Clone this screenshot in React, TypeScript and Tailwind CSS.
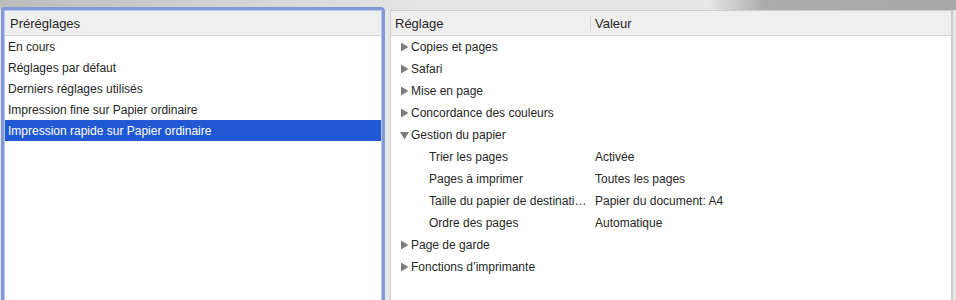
import React from "react";

const font = { fontFamily: '"Liberation Sans", Arial, sans-serif' };

function Tri({ open }: { open?: boolean }) {
  return (
    <svg width="9" height="10" viewBox="0 0 9 10" className="shrink-0">
      {open ? (
        <polygon points="0,2 9,2 4.5,9.5" fill="#7c7c7c" />
      ) : (
        <polygon points="1,0.5 8.5,5 1,9.5" fill="#7c7c7c" />
      )}
    </svg>
  );
}

const presets = [
  "En cours",
  "Réglages par défaut",
  "Derniers réglages utilisés",
  "Impression fine sur Papier ordinaire",
  "Impression rapide sur Papier ordinaire",
];

type Row = { label: string; value?: string; kind: "closed" | "open" | "child" };
const rows: Row[] = [
  { label: "Copies et pages", kind: "closed" },
  { label: "Safari", kind: "closed" },
  { label: "Mise en page", kind: "closed" },
  { label: "Concordance des couleurs", kind: "closed" },
  { label: "Gestion du papier", kind: "open" },
  { label: "Trier les pages", value: "Activée", kind: "child" },
  { label: "Pages à imprimer", value: "Toutes les pages", kind: "child" },
  { label: "Taille du papier de destination", value: "Papier du document: A4", kind: "child" },
  { label: "Ordre des pages", value: "Automatique", kind: "child" },
  { label: "Page de garde", kind: "closed" },
  { label: "Fonctions d’imprimante", kind: "closed" },
];

export default function App() {
  return (
    <div
      style={font}
      className="w-[956px] h-[300px] overflow-hidden flex items-start bg-[#e6e6e6] bg-[linear-gradient(to_right,#bcbcbc_0%,#d4d4d4_25%,#e6e6e6_45%,#e8e8e8_74%,#ababab_80%,#a8a8a8_100%)] bg-no-repeat bg-[length:100%_10px] text-[#262626]"
    >
      {/* Left panel */}
      <div className="ml-[1px] mt-[7px] w-[384px] h-[320px] shrink-0 rounded-[4px] border-[3px] border-[#8299d8] bg-white shadow-[inset_0_0_0_1px_#b9c7f0] flex flex-col">
        <div className="h-[25px] mx-[1px] mt-[1px] bg-[#efefef] border-b border-[#d4d4d4] flex items-center pl-[5px] pt-[1px] text-[13px] text-[#262626]">
          Préréglages
        </div>
        <div className="flex flex-col mx-[1px]">
          {presets.map((p, i) => (
            <div
              key={p}
              className={
                i === 4
                  ? "h-[21px] flex items-center pl-[3px] text-[12px] bg-[#2158d3] text-white"
                  : "h-[21px] flex items-center pl-[3px] text-[12px]"
              }
            >
              {p}
            </div>
          ))}
        </div>
      </div>

      {/* Gap */}
      <div className="w-[5px] shrink-0" />

      {/* Right panel */}
      <div className="mt-[10px] w-[563px] h-[320px] shrink-0 bg-white border-l border-r-2 border-t border-[#cccccc] flex flex-col">
        <div className="h-[25px] bg-[#efefef] border-b border-[#d6d6d6] flex items-center pt-[1px] text-[13px] text-[#262626]">
          <div className="w-[200px] h-full flex items-center pl-[4px] relative">
            Réglage
            <div className="absolute right-0 top-[4px] bottom-[4px] w-px bg-[#d6d6d6]" />
          </div>
          <div className="pl-[4px]">Valeur</div>
        </div>
        <div className="flex flex-col text-[12px]">
          {rows.map((r) => (
            <div key={r.label} className="h-[22px] flex items-center">
              <div className="w-[200px] flex items-center min-w-0">
                {r.kind === "child" ? (
                  <span className="pl-[38px] pr-[4px] truncate">{r.label}</span>
                ) : (
                  <span className="pl-[9px] flex items-center gap-[2px]">
                    <Tri open={r.kind === "open"} />
                    <span>{r.label}</span>
                  </span>
                )}
              </div>
              {r.value && <div className="pl-[4px]">{r.value}</div>}
            </div>
          ))}
        </div>
      </div>
    </div>
  );
}
